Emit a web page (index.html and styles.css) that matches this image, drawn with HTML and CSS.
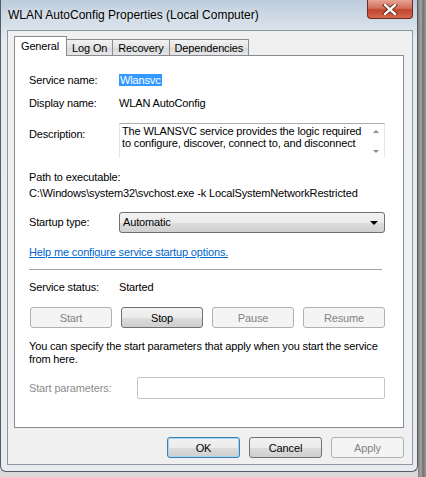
FILE: index.html
```html
<!DOCTYPE html>
<html lang="en">
<head>
  <meta charset="UTF-8" />
  <title>WLAN AutoConfig Properties (Local Computer)</title>
  <link rel="stylesheet" href="styles.css">
</head>
<body>

  <div class="window">
    <div class="titlebar">
      <span class="title">WLAN AutoConfig Properties (Local Computer)</span>
      <div class="close-btn">
        <svg width="16" height="11" viewBox="0 0 16 11">
          <path d="M3 1 L13 10 M13 1 L3 10" stroke="#5a1c14" stroke-width="4" stroke-linecap="square"/>
          <path d="M3 1 L13 10 M13 1 L3 10" stroke="#fff" stroke-width="2.4" stroke-linecap="square"/>
        </svg>
      </div>
    </div>

    <div class="client">
      <div class="tabs">
        <div class="tab active">General</div>
        <div class="tab">Log On</div>
        <div class="tab">Recovery</div>
        <div class="tab">Dependencies</div>
      </div>

      <div class="panel">
        <div class="row first">
          <span class="label">Service name:</span>
          <span class="value"><span class="selected">Wlansvc</span></span>
        </div>
        <div class="row gap10">
          <span class="label">Display name:</span>
          <span class="value">WLAN AutoConfig</span>
        </div>
        <div class="row desc-row">
          <span class="label desc-label">Description:</span>
          <div class="textbox">
            <div class="textbox-text">The WLANSVC service provides the logic required to configure, discover, connect to, and disconnect</div>
            <div class="scroll">
              <span class="arrow up"></span>
              <span class="arrow down"></span>
            </div>
          </div>
        </div>

        <div class="plain path-label">Path to executable:</div>
        <div class="plain path">C:\Windows\system32\svchost.exe -k LocalSystemNetworkRestricted</div>

        <div class="row combo-row">
          <span class="label">Startup type:</span>
          <div class="combo">
            <span>Automatic</span>
            <span class="combo-arrow"></span>
          </div>
        </div>

        <a class="help-link" href="#">Help me configure service startup options.</a>

        <div class="separator"></div>

        <div class="row status-row">
          <span class="label">Service status:</span>
          <span class="value">Started</span>
        </div>

        <div class="svc-buttons">
          <button class="btn" disabled>Start</button>
          <button class="btn">Stop</button>
          <button class="btn" disabled>Pause</button>
          <button class="btn" disabled>Resume</button>
        </div>

        <p class="note">You can specify the start parameters that apply when you start the service from here.</p>

        <div class="row params-row">
          <span class="label wide disabled-text">Start parameters:</span>
          <div class="input"></div>
        </div>
      </div>

      <div class="dialog-buttons">
        <button class="btn default">OK</button>
        <button class="btn">Cancel</button>
        <button class="btn" disabled>Apply</button>
      </div>
    </div>
  </div>

</body>
</html>
```

FILE: styles.css
```css
body {
  margin: 0;
  background: linear-gradient(to right, #d9d9d9 0, #d9d9d9 418px, #7d7d7d 418px, #a6a6a6 421px, #6f6f6f 423px, #9a9a9a 426px);
  font-family: "Liberation Sans", Arial, sans-serif;
  font-size: 11px;
  letter-spacing: -0.15px;
  color: #000;
  height: 477px;
  overflow: hidden;
}

.window {
  width: 418px;
  box-sizing: border-box;
  height: 472px;
  padding: 0 4px 7px 6px;
  border: 1px solid #555b62;
  border-top: none;
  border-radius: 0 0 6px 6px;
  background: linear-gradient(#bccbdb 0, #d3dde8 22px, #e6ebf0 40px, #e9ecef 100%);
}

.titlebar {
  height: 30px;
  display: flex;
  align-items: flex-start;
}

.title {
  font-size: 12px;
  letter-spacing: 0;
  margin-top: 8px;
  margin-left: 1px;
  color: #000;
  text-shadow: 0 0 6px rgba(255, 255, 255, 0.9);
}

.close-btn {
  margin-left: auto;
  width: 46px;
  height: 19px;
  box-sizing: border-box;
  border: 1px solid #6b2b22;
  border-top: none;
  border-radius: 0 0 4px 4px;
  background: linear-gradient(#e8a494 0, #d2705c 45%, #c2452c 55%, #d66a4e 100%);
  display: flex;
  align-items: center;
  justify-content: center;
}

.client {
  height: 435px;
  box-sizing: border-box;
  background: #f0f0f0;
  border: 1px solid #8d97a3;
  padding: 5px 8px 0 6px;
}

.tabs {
  display: flex;
  align-items: flex-end;
  height: 19px;
}

.tab {
  height: 16px;
  box-sizing: border-box;
  padding: 2px 5px 0;
  border: 1px solid #898c95;
  border-bottom: none;
  border-left: none;
  background: linear-gradient(#f3f3f3, #e3e3e3 50%, #d9d9d9 51%, #e6e6e6);
  line-height: 13px;
}

.tab.active {
  height: 20px;
  margin-bottom: -1px;
  padding: 3px 7px 0 6px;
  border-left: 1px solid #898c95;
  background: #fff;
  position: relative;
  z-index: 1;
}

.panel {
  width: 390px;
  height: 373px;
  box-sizing: border-box;
  background: #fff;
  border: 1px solid #898c95;
  padding: 17px 18px 0 14px;
}

.row {
  display: flex;
  align-items: center;
  line-height: 13px;
}

.row.first {
  margin-top: 1px;
}

.row.gap10 {
  margin-top: 10px;
}

.label {
  width: 90px;
  flex-shrink: 0;
}

.label.wide {
  width: 108px;
}

.selected {
  background: #3399ff;
  color: #fff;
  padding: 0 1px;
}

.desc-row {
  margin-top: 13px;
  align-items: flex-start;
}

.desc-label {
  padding-top: 5px;
}

.textbox {
  flex: 1;
  height: 35px;
  box-sizing: border-box;
  border: 1px solid #abadb3;
  border-color: #abadb3 #e3e9ef #fff #e2e3ea;
  display: flex;
  overflow: hidden;
}

.textbox-text {
  flex: 1;
  padding: 1px 0 0 2px;
  line-height: 12px;
}

.scroll {
  width: 16px;
  display: flex;
  flex-direction: column;
  justify-content: space-between;
  align-items: center;
  padding: 6px 0 4px;
}

.arrow {
  width: 0;
  height: 0;
  border-left: 3px solid transparent;
  border-right: 3px solid transparent;
}

.arrow.up {
  border-bottom: 3px solid #8a8a8a;
}

.arrow.down {
  border-top: 3px solid #8a8a8a;
}

.plain {
  line-height: 13px;
}

.path-label {
  margin-top: 13px;
}

.path {
  margin-top: 3px;
}

.combo-row {
  margin-top: 12px;
}

.combo {
  flex: 1;
  height: 21px;
  box-sizing: border-box;
  border: 1px solid #707070;
  border-radius: 3px;
  background: linear-gradient(#f2f2f2 0, #ebebeb 50%, #dddddd 51%, #cfcfcf 100%);
  display: flex;
  align-items: center;
  padding: 0 6px 0 3px;
}

.combo-arrow {
  margin-left: auto;
  width: 0;
  height: 0;
  border-left: 4px solid transparent;
  border-right: 4px solid transparent;
  border-top: 4px solid #000;
}

.help-link {
  display: block;
  margin-top: 13px;
  line-height: 13px;
  color: #0066cc;
  text-decoration: underline;
}

.separator {
  margin-top: 10px;
  height: 1px;
  width: 353px;
  background: #a0a0a0;
}

.status-row {
  margin-top: 11px;
}

.svc-buttons {
  margin-top: 13px;
  margin-left: 1px;
  display: grid;
  grid-template-columns: repeat(4, 82px);
  gap: 9px;
}

.btn {
  height: 21px;
  font-family: "Liberation Sans", Arial, sans-serif;
  font-size: 11px;
  letter-spacing: -0.15px;
  color: #000;
  border: 1px solid #707070;
  border-radius: 3px;
  background: linear-gradient(#f2f2f2 0, #ebebeb 50%, #dddddd 51%, #cfcfcf 100%);
  padding: 0;
}

.btn:disabled {
  color: #838383;
  border-color: #adb2b5;
  background: #f4f4f4;
}

.btn.default {
  border-color: #3c7fb1;
  box-shadow: inset 0 0 0 1px #a6d5f2;
}

.note {
  margin: 12px 0 0;
  line-height: 13px;
}

.params-row {
  margin-top: 11px;
}

.disabled-text {
  color: #8d8d8d;
}

.input {
  flex: 1;
  height: 22px;
  box-sizing: border-box;
  border: 1px solid #c5c5c5;
  border-radius: 2px;
  background: #fff;
}

.dialog-buttons {
  margin-top: 9px;
  display: flex;
  justify-content: flex-end;
  gap: 9px;
  width: 390px;
}

.dialog-buttons .btn {
  width: 73px;
}
```
